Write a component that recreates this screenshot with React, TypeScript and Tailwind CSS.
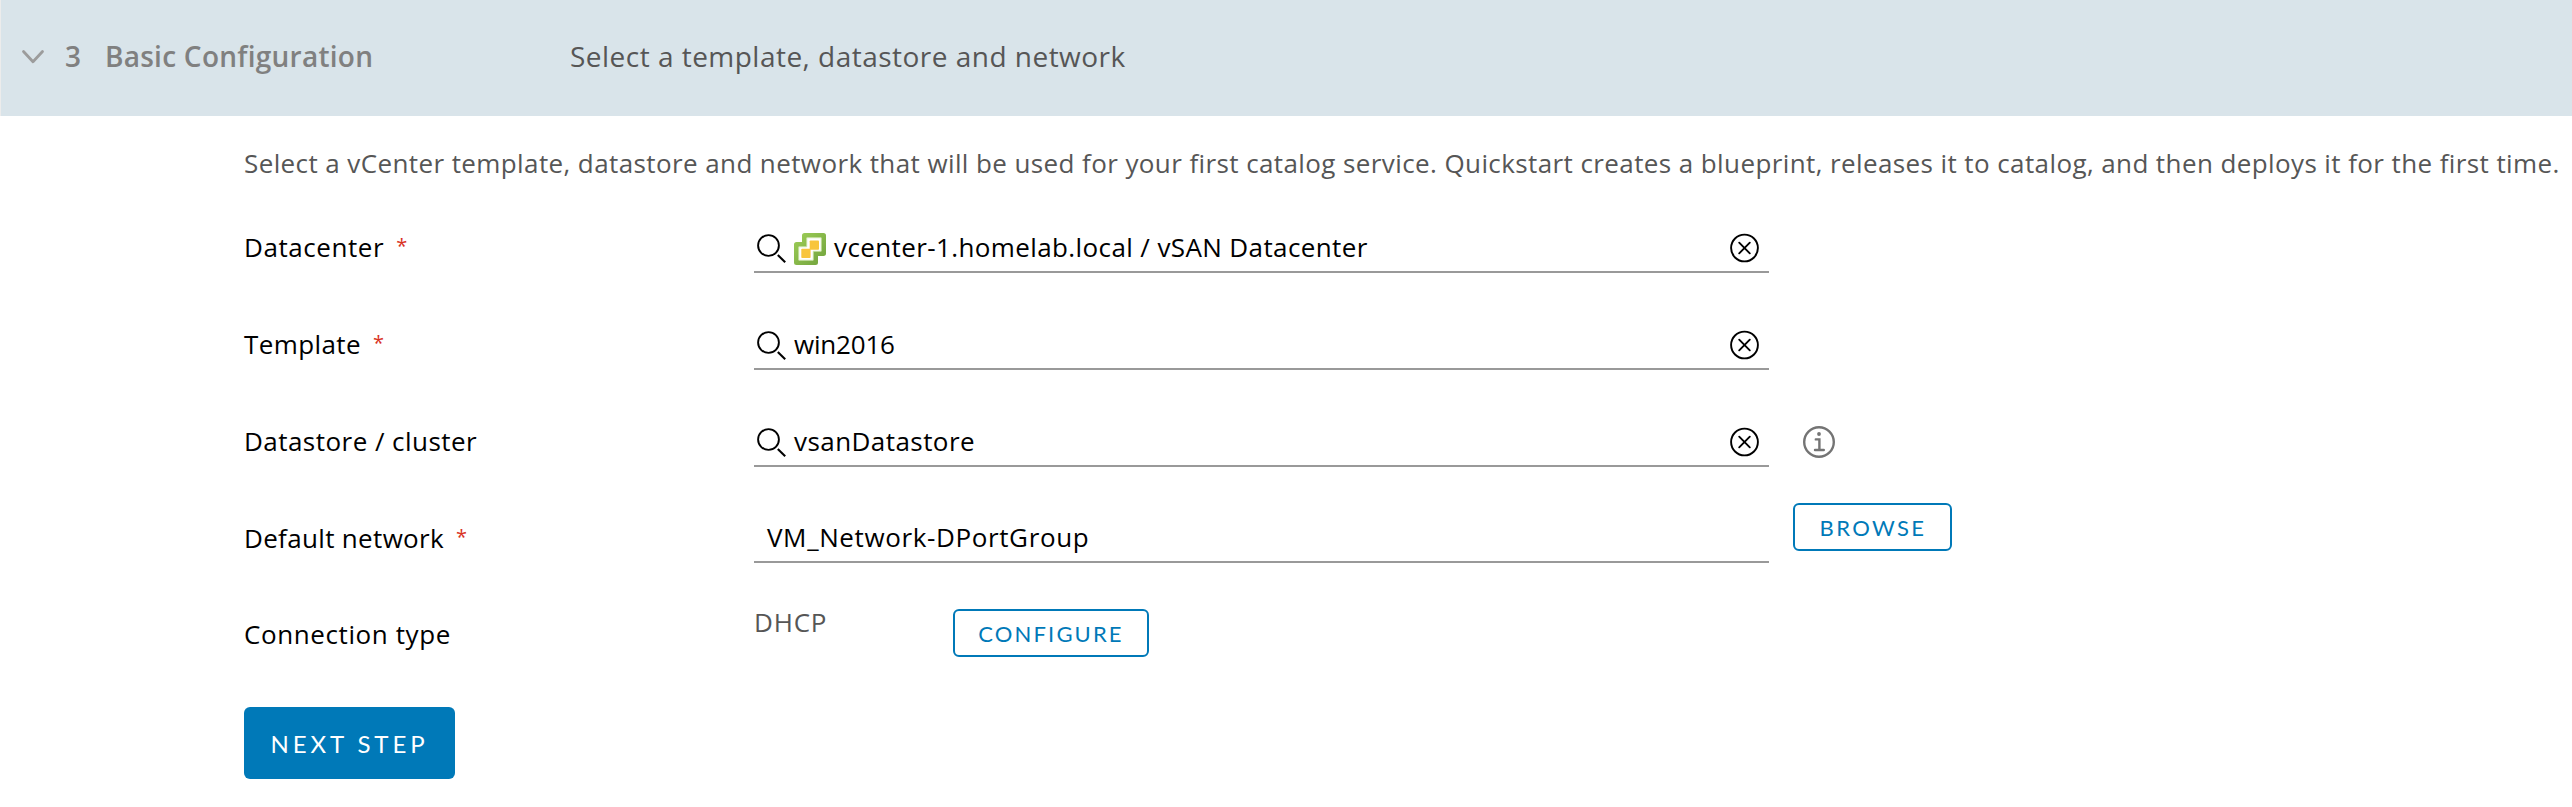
import type { ReactNode } from "react";

function SearchIcon() {
  return (
    <svg className="h-[32px] w-[32px] shrink-0" viewBox="0 0 32 32" fill="none" stroke="#000" strokeWidth="1.9">
      <circle cx="13.5" cy="12.5" r="10.4" />
      <path d="M22.800 21.900 30.200 29.200" strokeWidth="2.1" />
    </svg>
  );
}

function VCenterIcon() {
  return (
    <svg className="h-[32px] w-[32px] shrink-0" viewBox="0 0 32 32">
      <defs>
        <linearGradient id="leaf" x1="0" y1="0" x2="1" y2="1">
          <stop offset="0" stopColor="#9fcf58" />
          <stop offset="1" stopColor="#6fa13b" />
        </linearGradient>
      </defs>
      <path
        fill="url(#leaf)"
        d="M10.5 0H29.5A2.5 2.5 0 0 1 32 2.5V20.5A2.5 2.5 0 0 1 29.5 23H24V29.5A2.5 2.5 0 0 1 21.5 32H2.5A2.5 2.5 0 0 1 0 29.5V11.5A2.5 2.5 0 0 1 2.5 9H8V2.5A2.5 2.5 0 0 1 10.5 0Z"
      />
      <path
        fill="#fff"
        stroke="#d3e8b4"
        strokeWidth="0.8"
        strokeLinejoin="round"
        d="M12.8 4.8H27.2V18.2H19.2V27.2H4.8V13.8H12.8Z"
      />
      <rect x="15.7" y="7.5" width="9.3" height="9.3" rx="0.8" fill="#f8c53c" />
      <rect x="7.3" y="15.8" width="9.3" height="9.3" rx="0.8" fill="#f8c53c" />
    </svg>
  );
}

function ClearIcon() {
  return (
    <svg className="h-[30px] w-[30px] shrink-0" viewBox="0 0 30 30" fill="none" stroke="#000" strokeWidth="1.9">
      <circle cx="14.5" cy="15" r="13.4" />
      <path d="M9.2 9.7 19.8 20.3M19.8 9.7 9.2 20.3" strokeLinecap="round" />
    </svg>
  );
}

function InfoIcon() {
  return (
    <svg className="h-[32px] w-[32px] shrink-0" viewBox="0 0 32 32" fill="none" stroke="#747474" strokeWidth="2.4">
      <circle cx="16" cy="16" r="14.8" />
      <circle cx="16" cy="8" r="1.9" fill="#747474" stroke="none" />
      <path d="M12.8 13.4H16.4V24M12 24H20.8" strokeLinecap="round" />
    </svg>
  );
}

function Label({ children, required, className }: { children: ReactNode; required?: boolean; className: string }) {
  return (
    <div className={`flex w-[510px] shrink-0 leading-8 text-black ${className}`}>
      <span>{children}</span>
      {required && <span className="ml-[12px] text-[20px] leading-[29px] text-[#d9331f]">*</span>}
    </div>
  );
}

function LookupField({ children, icon, className }: { children: ReactNode; icon?: ReactNode; className: string }) {
  return (
    <div className="flex h-[50px] w-[1015px] shrink-0 items-start border-b-2 border-[#999] pt-[8px] pr-[9px] pl-px text-black">
      <div className="mt-[2px] flex h-8 items-center">
        <SearchIcon />
      </div>
      {icon && <div className="mt-[2px] ml-[7px] mr-[1px]">{icon}</div>}
      <span className={`ml-[7px] grow leading-8 ${className}`}>{children}</span>
      <div className="mt-[2px]">
        <ClearIcon />
      </div>
    </div>
  );
}

export default function App() {
  return (
    <div className="min-h-[807px] w-[2572px] overflow-hidden bg-white font-['Open_Sans',sans-serif] text-[26px]">
      <header className="flex h-[116px] items-center border-l border-[#ececec] bg-[#d9e4ea] pb-[5px] text-[28px] leading-9">
        <svg className="ml-[20px] h-[16px] w-[24px] shrink-0" viewBox="0 0 24 16" fill="none" stroke="#9c9c9c" strokeWidth="2.8" strokeLinecap="round" strokeLinejoin="round">
          <path d="M2.5 3.5 12 13.7 21.5 3.5" />
        </svg>
        <span className="ml-[20px] w-[40px] font-semibold text-[#808080]">3</span>
        <h2 className="w-[465px] font-semibold tracking-[0.26px] whitespace-nowrap text-[#808080]">Basic Configuration</h2>
        <p className="tracking-[0.48px] whitespace-nowrap text-[#565656]">Select a template, datastore and network</p>
      </header>

      <main className="pt-[31px] pl-[244px]">
        <p className="mb-[44px] leading-8 tracking-[0.4px] whitespace-nowrap text-[#565656]">
          Select a vCenter template, datastore and network that will be used for your first catalog service. Quickstart creates a blueprint, releases it to catalog, and then deploys it for the first time.
        </p>

        <div className="flex h-[97px]">
          <Label required className="pt-[8px] tracking-[0.57px]">Datacenter</Label>
          <LookupField icon={<VCenterIcon />} className="tracking-[0.39px]">vcenter-1.homelab.local / vSAN Datacenter</LookupField>
        </div>

        <div className="flex h-[97px]">
          <Label required className="pt-[8px] tracking-[0.4px]">Template</Label>
          <LookupField className="tracking-[-0.2px]">win2016</LookupField>
        </div>

        <div className="flex h-[86px]">
          <Label className="pt-[8px] tracking-[0.46px]">Datastore / cluster</Label>
          <LookupField className="tracking-[0.44px]">vsanDatastore</LookupField>
          <div className="mt-[9px] ml-[34px]">
            <InfoIcon />
          </div>
        </div>

        <div className="flex h-[102px]">
          <Label required className="pt-[19px] tracking-[0.33px]">Default network</Label>
          <div className="h-[60px] w-[1015px] shrink-0 border-b-2 border-[#999] pt-[18px] pl-[13px] leading-8 tracking-[0.62px] text-black">
            VM_Network-DPortGroup
          </div>
          <button className="ml-[24px] h-[48px] w-[159px] rounded-[6px] border-2 border-[#0079b8] pt-px pl-px font-['Lato'] text-[22px] leading-[43px] tracking-[2.4px] text-[#0079b8]">
            BROWSE
          </button>
        </div>

        <div className="flex h-[102px]">
          <Label className="pt-[13px] tracking-[0.6px]">Connection type</Label>
          <span className="w-[199px] pt-px leading-8 tracking-[0.8px] text-[#565656]">DHCP</span>
          <button className="mt-[4px] h-[48px] w-[196px] rounded-[6px] border-2 border-[#0079b8] pt-px font-['Lato'] text-[22px] leading-[43px] tracking-[2.13px] text-[#0079b8]">
            CONFIGURE
          </button>
        </div>

        <button className="h-[72px] w-[211px] rounded-[6px] bg-[#0079b8] pt-px font-['Lato'] text-[24px] leading-[71px] tracking-[3.9px] whitespace-nowrap text-white">
          NEXT STEP
        </button>
      </main>
    </div>
  );
}
